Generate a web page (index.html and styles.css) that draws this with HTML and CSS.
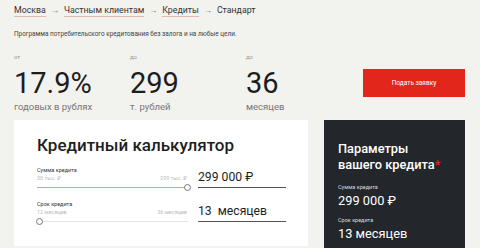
FILE: index.html
```html
<!DOCTYPE html>
<html lang="ru">
<head>
<meta charset="utf-8">
<link rel="stylesheet" href="styles.css">
</head>
<body>
<div class="page">
  <nav class="crumbs">
    <a class="crumb">Москва</a><span class="arrow">→</span>
    <a class="crumb">Частным клиентам</a><span class="arrow">→</span>
    <a class="crumb">Кредиты</a><span class="arrow">→</span>
    <span class="current">Стандарт</span>
  </nav>
  <p class="lead">Программа потребительского кредитования без залога и на любые цели.</p>

  <div class="stats">
    <div class="stat">
      <div class="stat-pre">от</div>
      <div class="stat-num">17.9%</div>
      <div class="stat-sub">годовых в рублях</div>
    </div>
    <div class="stat">
      <div class="stat-pre">до</div>
      <div class="stat-num">299</div>
      <div class="stat-sub">т. рублей</div>
    </div>
    <div class="stat">
      <div class="stat-pre">до</div>
      <div class="stat-num">36</div>
      <div class="stat-sub">месяцев</div>
    </div>
    <button class="apply">Подать заявку</button>
  </div>

  <div class="cards">
    <section class="calc">
      <h2 class="calc-title">Кредитный калькулятор</h2>
      <div class="field">
        <div class="slider">
          <div class="slider-label">Сумма кредита</div>
          <div class="slider-range"><span>50 тыс. ₽</span><span>299 тыс. ₽</span></div>
          <div class="track">
            <div class="track-fill" style="width: 100%"></div>
            <div class="thumb" style="left: 100%"></div>
          </div>
        </div>
        <div class="value">299 000 ₽</div>
      </div>
      <div class="field">
        <div class="slider">
          <div class="slider-label">Срок кредита</div>
          <div class="slider-range"><span>12 месяцев</span><span>36 месяцев</span></div>
          <div class="track">
            <div class="track-fill" style="width: 2%"></div>
            <div class="thumb" style="left: 2%"></div>
          </div>
        </div>
        <div class="value">13&nbsp; месяцев</div>
      </div>
    </section>

    <aside class="summary">
      <h3 class="summary-title">Параметры<br>вашего кредита<span class="star">*</span></h3>
      <div class="summary-label">Сумма кредита</div>
      <div class="summary-value">299 000 ₽</div>
      <div class="summary-label">Срок кредита</div>
      <div class="summary-value">13 месяцев</div>
    </aside>
  </div>
</div>
</body>
</html>
```

FILE: styles.css
```css
* { box-sizing: border-box; margin: 0; padding: 0; }

html, body {
  background: #f2f2ee;
  font-family: Roboto, "Noto Sans", Arial, sans-serif;
  color: #222;
  overflow: hidden;
}

.page {
  width: 480px;
  height: 248px;
  padding: 4px 15px 0 14px;
}

.crumbs {
  display: flex;
  align-items: baseline;
  font-size: 8.8px;
  line-height: 13px;
  color: #333;
  white-space: nowrap;
}

.crumb {
  border-bottom: 1px solid #e3b7b2;
  line-height: 11px;
}

.arrow {
  color: #666;
  margin: 0 5px;
  font-size: 8px;
}

.current { color: #333; }

.lead {
  margin-top: 13px;
  font-size: 6.4px;
  line-height: 8px;
  color: #444;
}

.stats {
  display: flex;
  align-items: flex-start;
  margin-top: 15px;
}

.stat {
  width: 116px;
  display: flex;
  flex-direction: column;
}

.stat-pre {
  font-size: 6px;
  line-height: 8px;
  color: #999;
}

.stat-num {
  margin-top: 5px;
  font-size: 29px;
  line-height: 34px;
  color: #1d1d1d;
}

.stat-sub {
  margin-top: 1px;
  font-size: 9.5px;
  line-height: 12px;
  color: #777;
}

.apply {
  margin-left: auto;
  margin-top: 16px;
  width: 102px;
  height: 28px;
  border: none;
  background: #e2261b;
  color: #fff;
  font-family: Roboto, Arial, sans-serif;
  font-size: 6.5px;
}

.cards {
  display: flex;
  align-items: flex-start;
  gap: 16px;
  margin-top: 7px;
}

.calc {
  width: 294px;
  height: 126px;
  background: #fff;
  padding: 15px 0 0 23px;
}

.calc-title {
  font-size: 17px;
  line-height: 20px;
  font-weight: 500;
  color: #1e1e1e;
}

.field {
  display: flex;
  gap: 8px;
  margin-top: 11px;
}

.field + .field { margin-top: 10px; }

.slider {
  width: 153px;
  display: flex;
  flex-direction: column;
}

.slider-label {
  font-size: 5.5px;
  line-height: 8px;
  color: #333;
}

.slider-range {
  display: flex;
  justify-content: space-between;
  padding-right: 3px;
  font-size: 5.5px;
  line-height: 8px;
  color: #bbb;
}

.track {
  position: relative;
  height: 6px;
  margin-top: 2px;
  margin-right: 2px;
}

.track::before {
  content: "";
  position: absolute;
  left: 0;
  right: 0;
  top: 2.5px;
  height: 1px;
  background: #e4e4e4;
}

.track-fill {
  position: absolute;
  left: 0;
  top: 2.5px;
  height: 1px;
  background: #caa19b;
}

.thumb {
  position: absolute;
  top: 0;
  width: 7px;
  height: 7px;
  margin-left: -4px;
  border: 1px solid #777;
  border-radius: 50%;
  background: #fff;
}

.value {
  align-self: flex-end;
  width: 88px;
  margin-bottom: 2px;
  padding-bottom: 3px;
  font-size: 12.2px;
  line-height: 14px;
  color: #1e1e1e;
  border-bottom: 1px solid #555;
}

.summary {
  width: 141px;
  height: 129px;
  background: #23262b;
  color: #fff;
  padding: 21px 0 0 14px;
}

.summary-title {
  font-size: 12.8px;
  line-height: 16px;
  font-weight: 500;
}

.star { color: #d8281f; }

.summary-label {
  margin-top: 10px;
  font-size: 5.5px;
  line-height: 8px;
  color: #ddd;
}

.summary-value {
  margin-top: 2px;
  font-size: 12.8px;
  line-height: 15px;
}

.summary-value + .summary-label { margin-top: 8px; }
```
